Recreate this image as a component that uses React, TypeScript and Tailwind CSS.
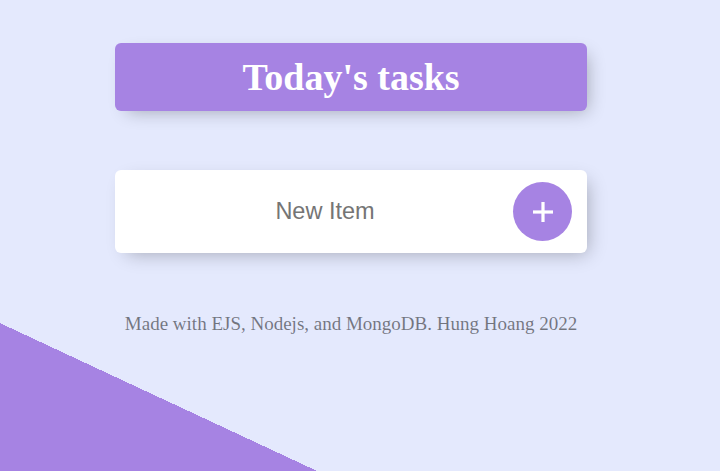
import React from 'react';

const App: React.FC = () => {
  return (
    <div className="min-h-screen w-full overflow-hidden bg-[#E4E9FD] bg-[linear-gradient(25deg,#A683E3_50%,#E4E9FD_50%)] bg-[length:100%_982px] bg-no-repeat">
      <div className="ml-[115px] flex w-[472px] flex-col pt-[43px]">
        {/* Heading */}
        <div className="flex h-[68px] items-center justify-center rounded-[6px] bg-[#A683E3] shadow-[6px_6px_18px_-6px_rgba(0,0,0,0.3)]">
          <h1 className="font-['Liberation_Serif',serif] text-[38px] font-bold leading-none text-white">
            Today's tasks
          </h1>
        </div>

        {/* New item form */}
        <form className="mt-[59px] flex h-[83px] items-center rounded-[6px] bg-white pl-[22px] pr-[15px] shadow-[6px_6px_18px_-6px_rgba(0,0,0,0.3)]">
          <input
            type="text"
            placeholder="New Item"
            className="h-[70px] min-w-0 flex-1 bg-transparent text-center font-['Liberation_Sans',Arial,sans-serif] text-[23.5px] font-light text-gray-700 outline-none placeholder:text-[#757575]"
          />
          <button
            type="button"
            className="flex h-[59px] w-[59px] shrink-0 items-center justify-center rounded-full bg-[#A683E3] text-white"
            aria-label="Add"
          >
            <svg width="20" height="20" viewBox="0 0 20 20" fill="white">
              <rect x="0" y="8.4" width="20" height="3.2" />
              <rect x="8.4" y="0" width="3.2" height="20" />
            </svg>
          </button>
        </form>

        {/* Footer */}
        <footer className="mt-[57px] text-center font-['Liberation_Serif',serif] text-[19px] text-black/50">
          Made with EJS, Nodejs, and MongoDB. Hung Hoang 2022
        </footer>
      </div>
    </div>
  );
};

export default App;
